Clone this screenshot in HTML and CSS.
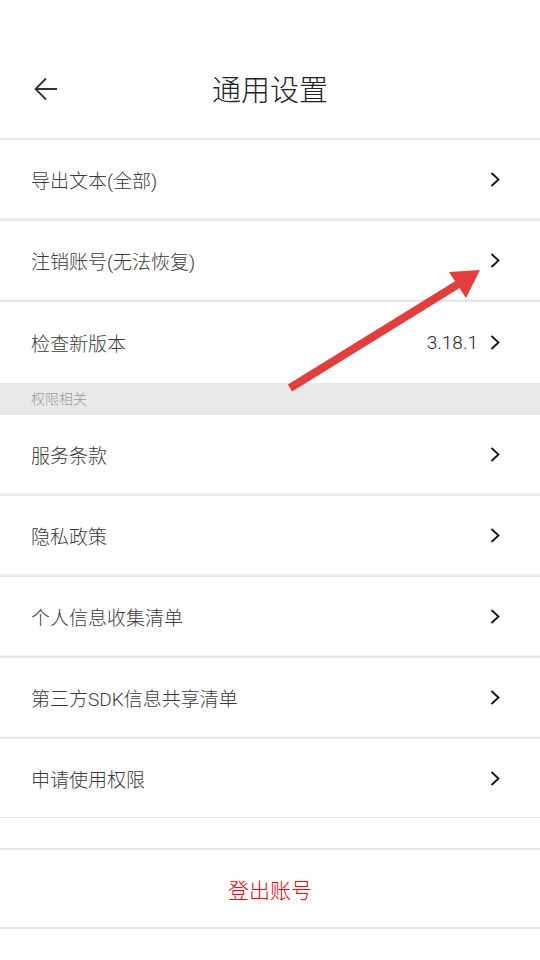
FILE: index.html
```html
<!DOCTYPE html>
<html lang="zh-CN">
<head>
  <meta charset="UTF-8" />
  <meta name="viewport" content="width=device-width, initial-scale=1.0"/>
  <title>通用设置</title>
  <link rel="stylesheet" href="styles.css">
</head>
<body>
  <header class="topbar">
    <button class="back-btn" aria-label="返回">
      <svg width="26" height="24" viewBox="0 0 26 24">
        <path d="M24 12 H3 M13 1.5 L2.5 12 L13 22.5" fill="none" stroke="#333" stroke-width="1.8"/>
      </svg>
    </button>
    <h1>通用设置</h1>
  </header>

  <ul class="list">
    <li class="row">
      <span>导出文本(全部)</span>
      <svg class="chev" width="10" height="15" viewBox="0 0 10 15"><polyline points="1.5,1 8.5,7.5 1.5,14" fill="none" stroke="#111" stroke-width="1.8"/></svg>
    </li>
    <li class="row">
      <span>注销账号(无法恢复)</span>
      <svg class="chev" width="10" height="15" viewBox="0 0 10 15"><polyline points="1.5,1 8.5,7.5 1.5,14" fill="none" stroke="#111" stroke-width="1.8"/></svg>
    </li>
    <li class="row thin">
      <span>检查新版本</span>
      <span class="extra">3.18.1</span>
      <svg class="chev" width="10" height="15" viewBox="0 0 10 15"><polyline points="1.5,1 8.5,7.5 1.5,14" fill="none" stroke="#111" stroke-width="1.8"/></svg>
    </li>
  </ul>

  <div class="section-title">权限相关</div>

  <ul class="list">
    <li class="row">
      <span>服务条款</span>
      <svg class="chev" width="10" height="15" viewBox="0 0 10 15"><polyline points="1.5,1 8.5,7.5 1.5,14" fill="none" stroke="#111" stroke-width="1.8"/></svg>
    </li>
    <li class="row">
      <span>隐私政策</span>
      <svg class="chev" width="10" height="15" viewBox="0 0 10 15"><polyline points="1.5,1 8.5,7.5 1.5,14" fill="none" stroke="#111" stroke-width="1.8"/></svg>
    </li>
    <li class="row">
      <span>个人信息收集清单</span>
      <svg class="chev" width="10" height="15" viewBox="0 0 10 15"><polyline points="1.5,1 8.5,7.5 1.5,14" fill="none" stroke="#111" stroke-width="1.8"/></svg>
    </li>
    <li class="row">
      <span>第三方SDK信息共享清单</span>
      <svg class="chev" width="10" height="15" viewBox="0 0 10 15"><polyline points="1.5,1 8.5,7.5 1.5,14" fill="none" stroke="#111" stroke-width="1.8"/></svg>
    </li>
    <li class="row last">
      <span>申请使用权限</span>
      <svg class="chev" width="10" height="15" viewBox="0 0 10 15"><polyline points="1.5,1 8.5,7.5 1.5,14" fill="none" stroke="#111" stroke-width="1.8"/></svg>
    </li>
  </ul>

  <div class="logout">登出账号</div>

  <!-- annotation arrow over the page -->
  <svg class="mark" width="540" height="960" viewBox="0 0 540 960">
    <line x1="290" y1="388" x2="460" y2="283" stroke="#e23e3e" stroke-width="8"/>
    <polygon points="480,270 449,272 466,298" fill="#e23e3e"/>
  </svg>
</body>
</html>
```

FILE: styles.css
```css
* { box-sizing: border-box; margin: 0; padding: 0; }

body {
  font-family: Roboto, "Noto Sans CJK SC", sans-serif;
  font-weight: 300;
  background: #fff;
  color: #444;
  width: 540px;
  position: relative;
}

.topbar {
  height: 138px;
  padding-top: 38px;
  display: flex;
  align-items: center;
  justify-content: center;
  position: relative;
}

.topbar h1 {
  font-size: 29px;
  font-weight: 300;
  color: #222;
}

.back-btn {
  position: absolute;
  left: 33px;
  top: 77px;
  background: transparent;
  border: none;
  display: flex;
}

.list {
  list-style: none;
}

.row {
  height: 81px;
  display: flex;
  align-items: center;
  padding: 0 40px 0 31px;
  font-size: 19px;
  color: #3a3a3a;
  border-top: 2px solid #e8e8e8;
  border-bottom: 1px solid #f2f2f2;
}

.row span:first-child {
  flex: 1;
}

.row .extra {
  color: #222;
  margin-right: 12px;
}

.row .chev {
  flex-shrink: 0;
}

.row.thin {
  height: 83px;
  border-bottom: none;
}

.row.last {
  border-bottom: 1px solid #e8e8e8;
}

.section-title {
  height: 30px;
  background: #e9e9e9;
  padding-left: 31px;
  display: flex;
  align-items: center;
  font-size: 14px;
  color: #999;
}

.logout {
  margin-top: 30px;
  height: 81px;
  display: flex;
  align-items: center;
  justify-content: center;
  font-size: 21px;
  color: #f00;
  border-top: 2px solid #e8e8e8;
  border-bottom: 2px solid #e8e8e8;
}

.mark {
  position: absolute;
  left: 0;
  top: 0;
  pointer-events: none;
}
```
